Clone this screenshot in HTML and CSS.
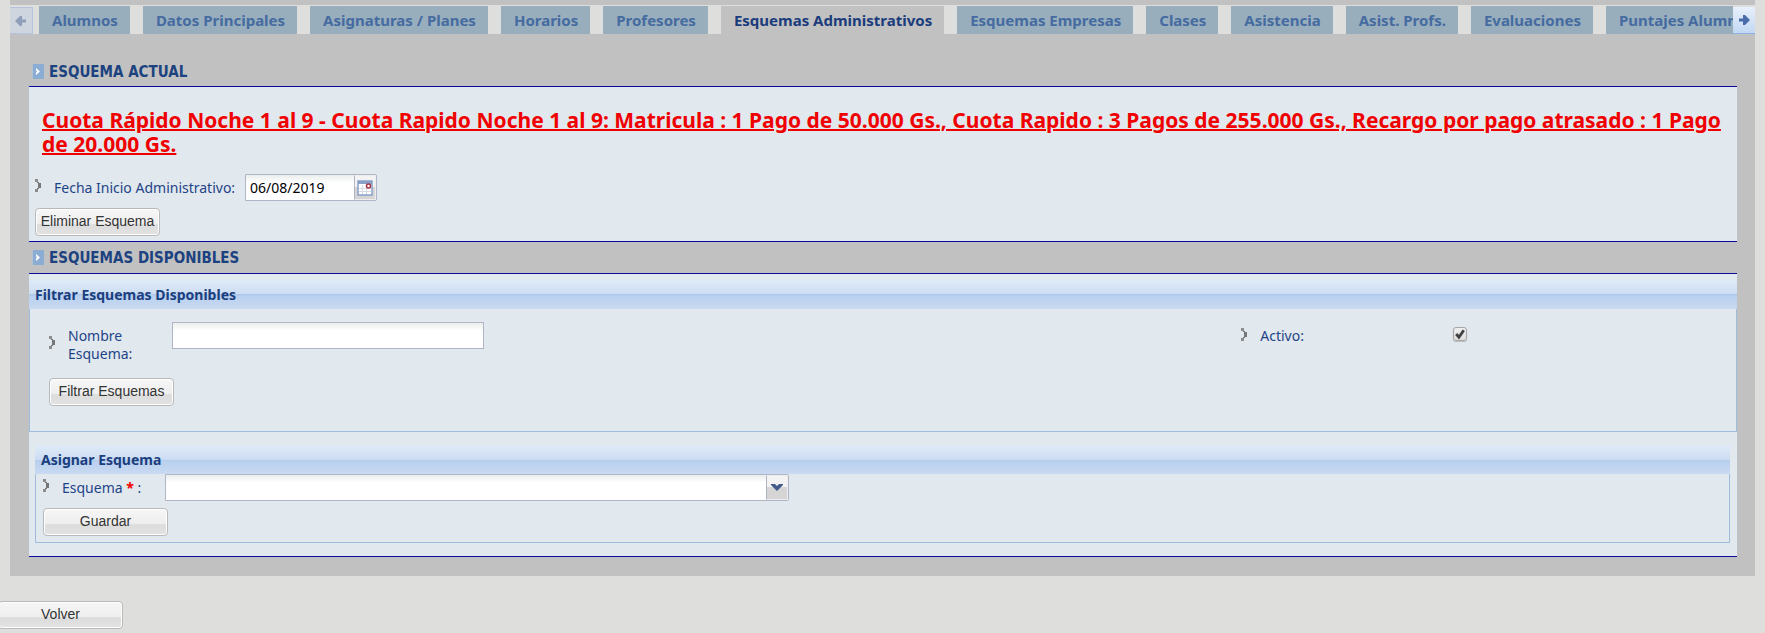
FILE: index.html
```html
<!DOCTYPE html>
<html lang="es">
<head>
<meta charset="utf-8">
<title>Esquemas Administrativos</title>
<link rel="stylesheet" href="styles.css">
</head>
<body>
<svg class="defs" aria-hidden="true">
  <symbol id="marker" viewBox="0 0 6 13"><path d="M0 0h3v3H0zM0 10h3v3H0z" fill="#8c8c8c"/><path d="M2 3h2v1h2v5H4v1H2V9h1V4H2z" fill="#777"/></symbol>
  <symbol id="section" viewBox="0 0 12 15"><rect x="1" width="11" height="15" fill="#8badd3"/><path d="M0 1h1v13H0z" fill="#b2c2d3"/><path d="M4 4l4 3.500-4 3.500V8.500l1-1-1-1z" fill="#fff"/></symbol>
  <symbol id="arrow" viewBox="0 0 12 12"><path d="M1 4.500h4V1h2l5 5-5 5H5V7.500H1z"/></symbol>
</svg>
<main class="panel">
  <nav class="tabs">
    <button class="scroll prev" type="button" aria-label="Anterior" disabled><svg><use href="#arrow"/></svg></button>
    <div class="strip">
      <a href="#">Alumnos</a><a href="#">Datos Principales</a><a href="#">Asignaturas / Planes</a><a href="#">Horarios</a><a href="#">Profesores</a><a class="active" href="#" aria-current="page">Esquemas Administrativos</a><a href="#">Esquemas Empresas</a><a href="#">Clases</a><a href="#">Asistencia</a><a href="#">Asist. Profs.</a><a href="#">Evaluaciones</a><a href="#">Puntajes Alumnos</a>
    </div>
    <button class="scroll next" type="button" aria-label="Siguiente"><svg><use href="#arrow"/></svg></button>
  </nav>

  <div class="sections">
    <h2 class="section-title"><svg><use href="#section"/></svg>ESQUEMA ACTUAL</h2>
    <section class="box current">
      <p class="summary">Cuota Rápido Noche 1 al 9 - Cuota Rapido Noche 1 al 9: Matricula : 1 Pago de 50.000 Gs., Cuota Rapido : 3 Pagos de 255.000 Gs., Recargo por pago atrasado : 1 Pago de 20.000 Gs.</p>
      <div class="row">
        <svg class="marker"><use href="#marker"/></svg>
        <label class="date-label" for="fecha">Fecha Inicio Administrativo:</label>
        <span class="control date">
          <input id="fecha" type="text" value="06/08/2019">
          <button class="trigger" type="button" aria-label="Elegir fecha">
            <svg class="calendar" viewBox="0 0 16 16"><rect x="1" y="1" width="14" height="14" fill="#fff" stroke="#88a0c8" stroke-width="1.500"/><path d="M1 1h14v3H1z" fill="#88a0c8"/><path d="M5.500 5v9M9.500 5v9M2 8.500h12M2 11.500h12" stroke="#d5dce6"/><circle cx="11.500" cy="6" r="2" fill="#fff" stroke="#a83040" stroke-width="1.500"/></svg>
          </button>
        </span>
      </div>
      <button class="btn" type="button">Eliminar Esquema</button>
    </section>

    <h2 class="section-title second"><svg><use href="#section"/></svg>ESQUEMAS DISPONIBLES</h2>
    <section class="box available">
      <div class="fieldset">
        <h3>Filtrar Esquemas Disponibles</h3>
        <div class="fields filter">
          <div class="grid">
            <div class="row top">
              <svg class="marker low"><use href="#marker"/></svg>
              <label class="name-label" for="nombre">Nombre Esquema:</label>
              <input class="control name" id="nombre" type="text">
            </div>
            <div class="row top">
              <svg class="marker"><use href="#marker"/></svg>
              <label class="active-label" for="activo">Activo:</label>
              <span class="check"><input id="activo" type="checkbox" checked><svg viewBox="0 0 13 13"><path d="M3 6.500l2.500 3L10 3" fill="none" stroke="#404040" stroke-width="2.600"/></svg></span>
            </div>
          </div>
          <button class="btn" type="button">Filtrar Esquemas</button>
        </div>
      </div>
      <div class="fieldset inner">
        <h3>Asignar Esquema</h3>
        <div class="fields assign">
          <div class="row">
            <svg class="marker"><use href="#marker"/></svg>
            <label class="scheme-label" for="esquema">Esquema <b>*</b> :</label>
            <span class="control combo">
              <select id="esquema"><option></option></select>
              <span class="trigger"><svg class="chevron" viewBox="0 0 12 7"><path d="M0 0h4l2 2 2-2h4v1L6 7 0 1z" fill="#44598c"/></svg></span>
            </span>
          </div>
          <button class="btn" type="button">Guardar</button>
        </div>
      </div>
    </section>
  </div>
</main>
<button class="btn back" type="button">Volver</button>
</body>
</html>
```
FILE: styles.css
```css
* { box-sizing: border-box; }

body {
  margin: 0;
  background: #dededc;
  color: #1f4488;
  font: 14px/18px "Noto Sans", Tahoma, sans-serif;
}

button, input, select { font: inherit; margin: 0; padding: 0; }
h2, h3, p { margin: 0; }
svg { display: block; flex: none; }
.defs { position: absolute; width: 0; height: 0; }

.panel {
  margin: 0 10px;
  padding: 5px 0 19px;
  background: #c1c1c1;
}

/* Tab strip */
.tabs {
  display: flex;
  align-items: stretch;
  height: 29px;
  padding-top: 1px;
  background: #dededc;
}
.strip {
  display: flex;
  flex: 1;
  gap: 13px;
  min-width: 0;
  padding-left: 6px;
  overflow: hidden;
}
.strip a {
  flex: none;
  padding: 0 12px 0 13px;
  background: #98aebd;
  color: #456ba0;
  font-size: 15px;
  font-weight: bold;
  line-height: 29px;
  text-decoration: none;
}
.strip a.active { background: #c1c1c1; color: #1a3c7c; }
.scroll {
  display: flex;
  align-items: center;
  justify-content: center;
  flex: none;
  width: 22px;
  margin-top: 1px;
  border: 0;
  border-bottom: 1px solid #8db2e3;
  background: linear-gradient(#e8f0fb, #c2d8f3);
  fill: #486da9;
}
.scroll svg { width: 12px; height: 12px; }
.prev {
  width: 23px;
  border: 1px solid #b5c4dc;
  border-left: 0;
  background: #cfd5df;
  fill: #909fb9;
}
.prev svg { transform: scaleX(-1); }

/* Sections */
.sections { padding: 23px 18px 0 19px; }
.section-title {
  display: flex;
  align-items: center;
  gap: 5px;
  height: 29px;
  padding-left: 3px;
  color: #1c4280;
  font: bold 15px/18px "DejaVu Sans Condensed", Tahoma, sans-serif;
}
.section-title svg { width: 12px; height: 15px; }
.section-title.second { height: 31px; }
.box {
  border: solid #0b0b9b;
  border-width: 1px 0;
  background: #e1e8ee;
}
.current { padding: 21px 6px 5px; }
.summary {
  padding: 0 7px;
  margin-bottom: 18px;
  color: #f00000;
  font-size: 21px;
  font-weight: bold;
  line-height: 24px;
  text-decoration: underline;
  text-decoration-thickness: 2px;
}

.row { display: flex; align-items: center; margin-bottom: 7px; }
.row.top { align-items: flex-start; }
.marker { width: 6px; height: 13px; margin-right: 13px; }
.row:not(.top) .marker { align-self: flex-start; margin-top: 5px; }
.date-label { width: 191px; white-space: nowrap; }

.control {
  display: flex;
  height: 27px;
  border: 1px solid #b0b5c6;
  background: linear-gradient(#eaeeed, #fff 8px);
}
.control input, .control select {
  flex: 1;
  min-width: 0;
  padding-left: 4px;
  border: 0;
  background: none;
  color: #000;
  appearance: none;
}
.date { width: 132px; border-radius: 0 2px 2px 0; }
.trigger {
  display: flex;
  align-items: center;
  justify-content: center;
  flex: none;
  width: 22px;
  border: 1px solid #eee;
  border-left: 1px solid #b0b5c6;
  background: linear-gradient(#f3f3f3 50%, #d5d5d6 50%);
}
.calendar { width: 16px; height: 16px; }
.chevron { width: 12px; height: 7px; }

.btn {
  display: block;
  width: 125px;
  height: 28px;
  padding-bottom: 2px;
  border: 1px solid #b9b9b9;
  border-radius: 4px;
  background: linear-gradient(#f6f6f6, #eee 58%, #dcdcdc 60%, #e2e2e2);
  box-shadow: inset 0 0 0 1px #fff;
  color: #333;
  font: 14px/18px "Liberation Sans", Arial, sans-serif;
  white-space: nowrap;
}

/* Fieldset panels */
.available { padding: 6px 0 13px; }
.fieldset h3 {
  height: 29px;
  padding-left: 6px;
  background: linear-gradient(#dfebf8, #ccdcf2 50%, #afc7e9 50%, #b9d0ef 56%, #c9daf1);
  color: #1a3e7e;
  font-size: 14px;
  line-height: 30px;
}
.fields { border: 1px solid #9fbcdf; border-top: 0; }
.filter { padding: 13px 12px 25px 19px; }
.grid {
  display: grid;
  grid-template-columns: 1193fr 483fr;
  margin-bottom: 15px;
}
.grid .row { margin-bottom: 0; }
.grid label { padding-top: 5px; }
.grid .marker { margin-top: 6px; }
.grid .marker.low { margin-top: 14px; }
.name-label { width: 104px; padding-right: 20px; }
.name { width: 312px; }
input.name { padding: 0 4px; color: #000; }
.active-label { width: 193px; }
.check { position: relative; margin-top: 5px; }
.check input {
  display: block;
  width: 14px;
  height: 14px;
  border: 1px solid #a5a5a5;
  border-radius: 3px;
  background: linear-gradient(#eee, #ddd);
  box-shadow: 0 1px 1px #bbb;
  appearance: none;
}
.check svg { position: absolute; inset: 0; width: 14px; height: 14px; pointer-events: none; }

.inner { margin: 13px 7px 0 6px; }
.assign { padding: 0 7px 6px; }
.scheme-label { width: 103px; }
.scheme-label b { color: #f00000; }
.combo { width: 624px; border-radius: 0 2px 2px 0; }

.back { margin-top: 25px; margin-left: -2px; }
```
